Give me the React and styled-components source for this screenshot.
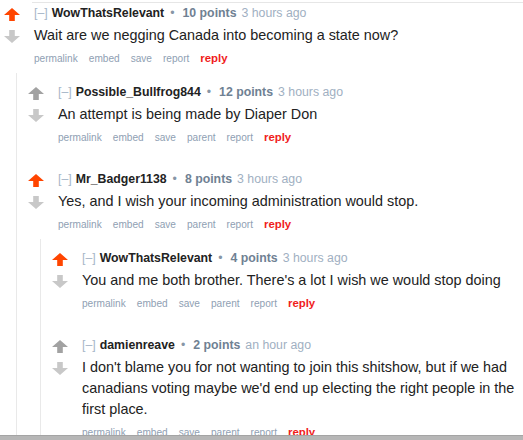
import React from "react";
import styled, { createGlobalStyle } from "styled-components";

const Global = createGlobalStyle`
  html, body { margin: 0; padding: 0; background: #ffffff; }
  body { font-family: "Liberation Sans", Arial, sans-serif; color: #222; overflow: hidden; }
`;

const Page = styled.div`
  padding-top: 2px;
  width: 523px;
  height: 440px;
  box-sizing: border-box;
  overflow: hidden;
`;

const TopRule = styled.div`
  margin-left: 32px;
  border-top: 1px solid #e6e6e6;
`;

const CommentBox = styled.div`
  padding-top: 2px;
`;

const Row = styled.div`
  display: flex;
  padding-left: 4px;
`;

const Votes = styled.div`
  width: 16px;
  flex: none;
  display: flex;
  flex-direction: column;
  align-items: center;
  gap: 9px;
  padding-top: 3px;
`;

const Entry = styled.div`
  margin-left: 14px;
  padding-bottom: 6px;
  flex: 1;
  min-width: 0;
`;

const Tagline = styled.div`
  font-size: 12.3px;
  line-height: 16px;
  color: #9fb0c2;
  white-space: nowrap;
`;

const Collapse = styled.span`
  color: #a6b6c8;
  margin-right: 4px;
`;

const Author = styled.span`
  color: #222;
  font-weight: bold;
`;

const Bullet = styled.span`
  color: #8796a6;
  margin: 0 8px 0 6px;
`;

const Score = styled.span`
  color: #6f8193;
  font-weight: bold;
  margin-right: 5px;
`;

const Time = styled.span`
  color: #9fb0c2;
`;

const Body = styled.p`
  margin: 4px 0 0 0;
  font-size: 14.4px;
  line-height: 21px;
  color: #222;
`;

const Buttons = styled.ul`
  list-style: none;
  margin: 4px 0 0 0;
  padding: 0;
  display: flex;
  align-items: baseline;
  gap: 11px;
  line-height: 16px;
`;

const Btn = styled.li`
  font-size: ${(p) => (p.$reply ? "11.4px" : "10.1px")};
  font-weight: ${(p) => (p.$reply ? "bold" : "normal")};
  color: ${(p) => (p.$reply ? "#f01c1c" : "#8fa0b3")};
`;

const ChildList = styled.div`
  margin-left: 16px;
  border-left: 1px solid #e9e9e9;
  padding-left: 7px;
  padding-top: 9px;
  display: flex;
  flex-direction: column;
  gap: 17px;
`;

const BottomBar = styled.div`
  position: fixed;
  left: 0;
  right: 0;
  bottom: 0;
  height: 4px;
  background: #b6b6b6;
  border-top: 1px solid #a4a4a4;
`;

const Arrow = ({ dir, color }) => (
  <svg width="16" height="13" viewBox="0 0 16 13" style={{ display: "block" }}>
    <polygon
      points="8,0 16,7 10.8,7 10.8,13 5.2,13 5.2,7 0,7"
      fill={color}
      transform={dir === "down" ? "rotate(180 8 6.5)" : undefined}
    />
  </svg>
);

const UP_COLORS = { up: "#ff4500", none: "#a2a2a2" };

const Comment = ({ c }) => (
  <CommentBox>
    <Row>
      <Votes>
        <Arrow dir="up" color={UP_COLORS[c.vote]} />
        <Arrow dir="down" color="#c8c8c8" />
      </Votes>
      <Entry>
        <Tagline>
          <Collapse>[–]</Collapse>
          <Author>{c.author}</Author>
          <Bullet>•</Bullet>
          <Score>{c.points}</Score>
          <Time>{c.time}</Time>
        </Tagline>
        <Body>{c.text}</Body>
        <Buttons>
          {c.buttons.map((b) => (
            <Btn key={b}>{b}</Btn>
          ))}
          <Btn $reply>reply</Btn>
        </Buttons>
      </Entry>
    </Row>
    {c.children && c.children.length > 0 && (
      <ChildList>
        {c.children.map((ch) => (
          <Comment key={ch.id} c={ch} />
        ))}
      </ChildList>
    )}
  </CommentBox>
);

const childButtons = ["permalink", "embed", "save", "parent", "report"];

const thread = {
  id: 1,
  author: "WowThatsRelevant",
  points: "10 points",
  time: "3 hours ago",
  vote: "up",
  text: "Wait are we negging Canada into becoming a state now?",
  buttons: ["permalink", "embed", "save", "report"],
  children: [
    {
      id: 2,
      author: "Possible_Bullfrog844",
      points: "12 points",
      time: "3 hours ago",
      vote: "none",
      text: "An attempt is being made by Diaper Don",
      buttons: childButtons,
    },
    {
      id: 3,
      author: "Mr_Badger1138",
      points: "8 points",
      time: "3 hours ago",
      vote: "up",
      text: "Yes, and I wish your incoming administration would stop.",
      buttons: childButtons,
      children: [
        {
          id: 4,
          author: "WowThatsRelevant",
          points: "4 points",
          time: "3 hours ago",
          vote: "up",
          text: "You and me both brother. There's a lot I wish we would stop doing",
          buttons: childButtons,
        },
        {
          id: 5,
          author: "damienreave",
          points: "2 points",
          time: "an hour ago",
          vote: "none",
          text:
            "I don't blame you for not wanting to join this shitshow, but if we had canadians voting maybe we'd end up electing the right people in the first place.",
          buttons: childButtons,
        },
      ],
    },
  ],
};

export default function App() {
  return (
    <Page>
      <Global />
      <TopRule />
      <Comment c={thread} />
      <BottomBar />
    </Page>
  );
}
